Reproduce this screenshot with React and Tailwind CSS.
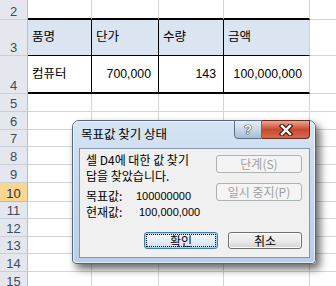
import React from "react";

const font = { fontFamily: '"Liberation Sans", "Noto Sans CJK KR", sans-serif' };
const krFont = { fontFamily: '"Noto Sans CJK KR", "Liberation Sans", sans-serif' };

const rows = [
  { n: 2, h: "h-[20px]" },
  { n: 3, h: "h-[36px]" },
  { n: 4, h: "h-[38px]" },
  { n: 5, h: "h-[18px]" },
  { n: 6, h: "h-[18px]" },
  { n: 7, h: "h-[17px]" },
  { n: 8, h: "h-[18px]" },
  { n: 9, h: "h-[18px]" },
  { n: 10, h: "h-[19px]" },
  { n: 11, h: "h-[17px]" },
  { n: 12, h: "h-[18px]" },
  { n: 13, h: "h-[17px]" },
  { n: 14, h: "h-[18px]" },
  { n: 15, h: "h-[18px]" },
];

const widths = ["w-[64px]", "w-[67px]", "w-[65px]", "w-[86px]"];

const tableData = {
  3: ["품명", "단가", "수량", "금액"],
  4: ["컴퓨터", "700,000", "143", "100,000,000"],
};

function Cell({ w, rowN, col, children }) {
  const inTable = rowN === 3 || rowN === 4;
  const rColor = inTable && col < 3 ? "border-r-black" : "border-r-[#D4D4D4]";
  let b = "border-b border-b-[#D4D4D4]";
  if (rowN === 2) b = "border-b-2 border-b-black";
  if (rowN === 3) b = "border-b border-b-black";
  if (rowN === 4) b = "border-b-2 border-b-black";
  const bg = rowN === 3 ? "bg-[#DBE5F1]" : "bg-white";
  const align = rowN === 4 && col > 0 ? "justify-end pr-[7px] text-[12.3px]" : "justify-start pl-[4px] text-[12.5px]";
  return (
    <div className={`${w} h-full shrink-0 box-border flex items-center border-r ${rColor} ${b} ${bg} ${align} text-black`}>
      {children}
    </div>
  );
}

function Sheet() {
  return (
    <div className="flex flex-col" style={font}>
      {rows.map((r) => {
        const sel = r.n === 10;
        return (
          <div key={r.n} className={`flex ${r.h} shrink-0`}>
            <div
              className={`w-[28px] h-full shrink-0 box-border flex items-end justify-center border-r border-b text-[13px] leading-[15px] ${
                sel
                  ? "bg-[#F8D792] border-r-[#E9A64B] border-b-[#E2B66A] text-[#2E2E2E]"
                  : "bg-[#E4E8EE] border-r-[#B7BFCA] border-b-[#C9CFD8] text-[#3E4A5A]"
              }`}
            >
              {r.n}
            </div>
            {widths.map((w, i) => (
              <Cell key={i} w={w} rowN={r.n} col={i}>
                {tableData[r.n] ? tableData[r.n][i] : null}
              </Cell>
            ))}
            <div className="flex-1 h-full box-border border-b border-b-[#D4D4D4] bg-white" />
          </div>
        );
      })}
    </div>
  );
}

function WinButton({ children, disabled, def, w, h }) {
  if (disabled) {
    return (
      <div className={`${w} ${h} box-border rounded-[3px] border border-[#ADB2B5] bg-[#F4F4F4] flex items-center justify-center text-[12px] text-[#A0A0A0]`}>
        {children}
      </div>
    );
  }
  if (def) {
    return (
      <div className={`${w} ${h} box-border rounded-[3px] border border-[#3C7FB1] bg-gradient-to-b from-[#F2F7FB] via-[#E4EEF6] to-[#CFE0EE] p-[1px] shadow-[inset_0_0_0_1px_#9ED6F5]`}>
        <div className="w-full h-full box-border border border-dotted border-black flex items-center justify-center text-[12px] leading-none text-black">
          {children}
        </div>
      </div>
    );
  }
  return (
    <div className={`${w} ${h} box-border rounded-[3px] border border-[#707070] bg-gradient-to-b from-[#F2F2F2] via-[#EBEBEB] to-[#D3D3D3] shadow-[inset_0_0_0_1px_#FCFCFC] flex items-center justify-center text-[12px] leading-none text-black`}>
      {children}
    </div>
  );
}

function Dialog() {
  return (
    <div
      className="absolute left-[72px] top-[120px] w-[244px] h-[144px] box-border rounded-t-[7px] rounded-b-[4px] border border-[#56677C] bg-gradient-to-b from-[#D6E4F4] via-[#C4D7EE] to-[#B9CFE9] shadow-[4px_5px_9px_rgba(0,0,0,0.6)] pt-[27px] pl-[6px] pr-[5px] pb-[5px]"
      style={krFont}
    >
      <div className="absolute inset-0 rounded-t-[6px] rounded-b-[3px] border border-white/60 pointer-events-none" />
      <div className="absolute left-[8px] top-[5px] text-[12.5px] leading-[16px] text-black">목표값 찾기 상태</div>
      <div className="absolute top-[-1px] right-[5px] flex">
        <div className="w-[28px] h-[19px] box-border border border-[#5E6F86] rounded-bl-[4px] bg-gradient-to-b from-[#E6EEF7] via-[#C9D7E8] to-[#A9BCD4] flex items-center justify-center">
          <span className="text-[13px] font-bold leading-none text-white [text-shadow:0_0_1px_#1C2C44,0_0_1px_#1C2C44,0_0_1px_#1C2C44]" style={font}>?</span>
        </div>
        <div className="w-[48px] h-[19px] box-border border border-l-0 border-[#6A2A1E] rounded-br-[4px] bg-gradient-to-b from-[#E9A593] via-[#C9492E] to-[#D36A4E] flex items-center justify-center">
          <svg width="16" height="12" viewBox="0 0 16 12">
            <path d="M4 2 L12 10 M12 2 L4 10" stroke="#4A1810" strokeWidth="4.6" strokeLinecap="square" />
            <path d="M4 2 L12 10 M12 2 L4 10" stroke="#FFFFFF" strokeWidth="2.4" strokeLinecap="square" />
          </svg>
        </div>
      </div>
      <div className="w-full h-full box-border border border-[#8497AF] bg-[#F0F0F0] flex flex-col">
        <div className="flex justify-between h-[71px]">
          <div className="pt-[3px] pl-[6px] text-[12px] leading-[16px] text-black">
            <div>셀 D4에 대한 값 찾기</div>
            <div>답을 찾았습니다.</div>
            <div className="mt-[4px] flex">
              <span className="w-[50px]">목표값:</span>
              <span className="text-[11px]" style={font}>100000000</span>
            </div>
            <div className="flex">
              <span className="w-[53px]">현재값:</span>
              <span className="text-[11px]" style={font}>100,000,000</span>
            </div>
          </div>
          <div className="pt-[6px] pr-[7px] flex flex-col gap-[10px]">
            <WinButton disabled w="w-[86px]" h="h-[18px]">단계(S)</WinButton>
            <WinButton disabled w="w-[86px]" h="h-[18px]">일시 중지(P)</WinButton>
          </div>
        </div>
        <div className="mt-[12px] pr-[7px] flex justify-end gap-[10px]">
          <WinButton def w="w-[74px]" h="h-[17px]">확인</WinButton>
          <WinButton w="w-[74px]" h="h-[17px]">취소</WinButton>
        </div>
      </div>
    </div>
  );
}

export default function App() {
  return (
    <div className="relative w-[336px] h-[286px] overflow-hidden bg-white">
      <Sheet />
      <Dialog />
    </div>
  );
}
